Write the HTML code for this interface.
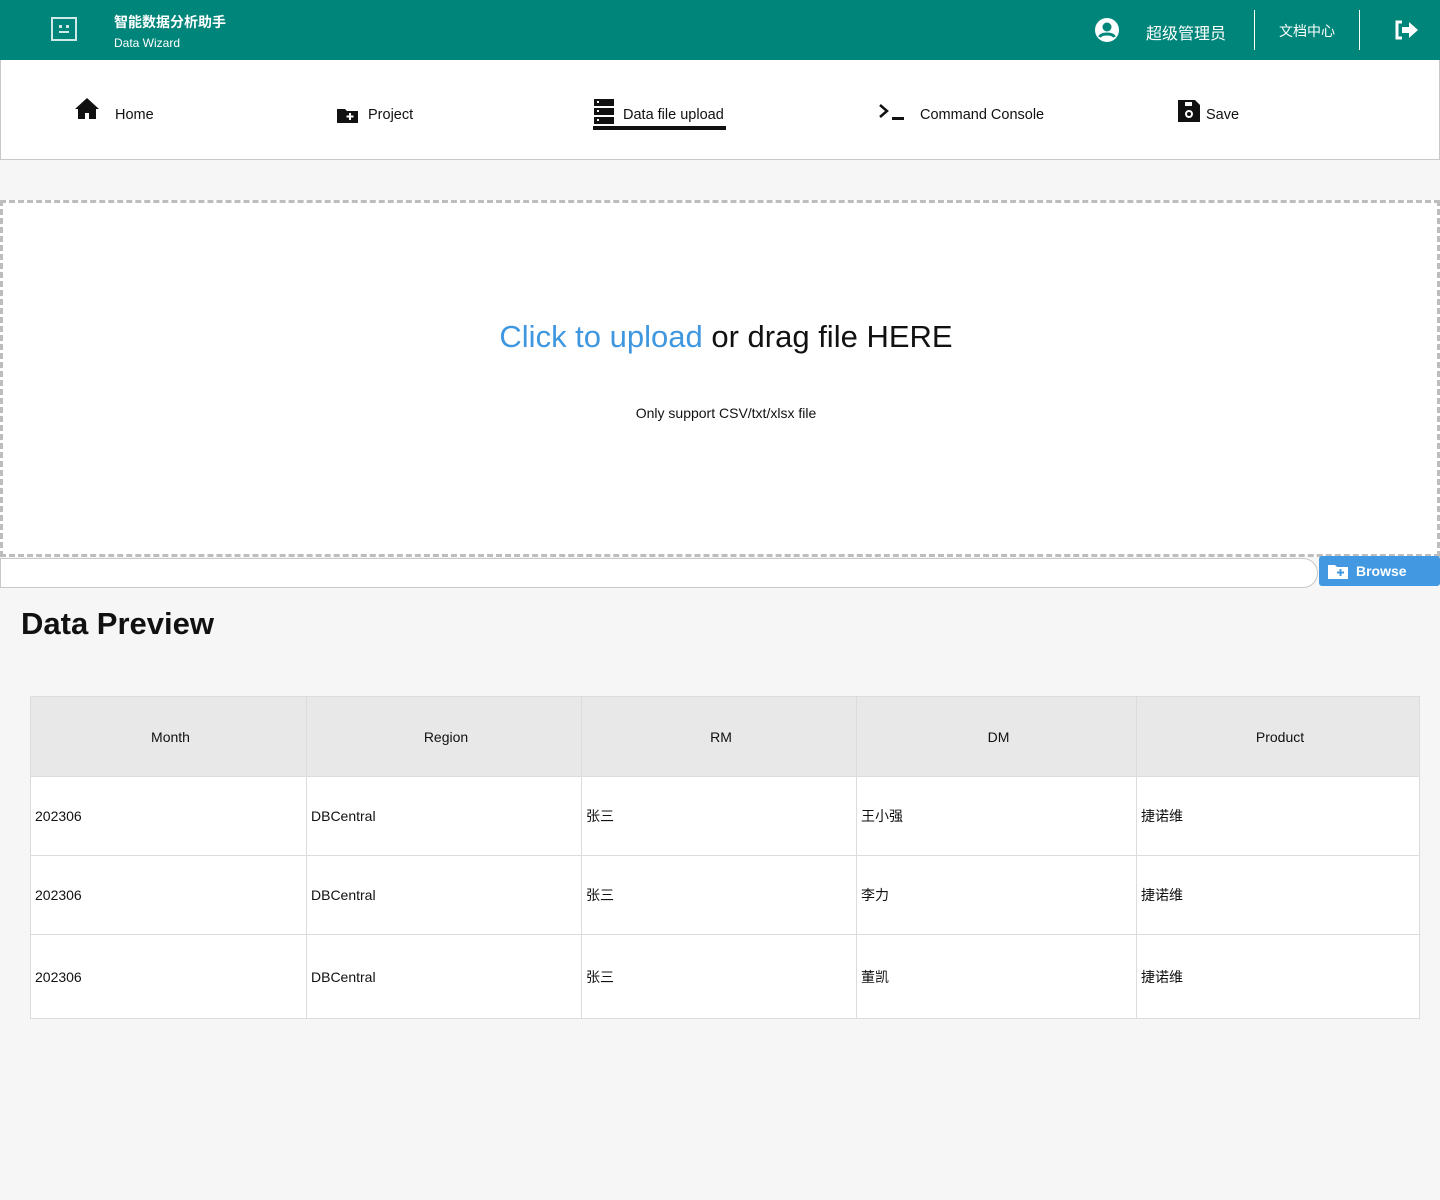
<!DOCTYPE html>
<html><head><meta charset="utf-8"><style>
*{box-sizing:border-box;margin:0;padding:0}
body{width:1440px;height:1200px;background:#f6f6f6;font-family:"Liberation Sans","Noto Sans CJK SC",sans-serif;position:relative;overflow:hidden;color:#111}
.top{position:absolute;left:0;top:0;width:1440px;height:60px;background:#00857a;color:#fff}
.abs{position:absolute}
.nav{position:absolute;left:0;top:60px;width:1440px;height:100px;background:#fff;border:1px solid #c8c8c8;border-top:none}
.ni{position:absolute;top:46px;font-size:14.5px;color:#111;line-height:18px}
.drop{position:absolute;left:0;top:200px;width:1440px;height:357px;border:3px dashed #bdbdbd;background:#fff}
table{position:absolute;left:30px;top:696px;width:1390px;border-collapse:collapse;font-size:14px;background:#fff}
td,th{border:1px solid #dcdcdc;font-weight:normal;text-align:left;padding-left:4px}
th{background:#e8e8e8;text-align:center;height:80px}
</style></head><body>
<div class="top">
 <svg class="abs" style="left:51px;top:17px" width="26" height="25" viewBox="0 0 26 25"><rect x="1" y="1" width="24" height="22" fill="none" stroke="#cfe9e6" stroke-width="2"/><rect x="8" y="8" width="3" height="3" fill="#cfe9e6"/><rect x="15" y="8" width="3" height="3" fill="#cfe9e6"/><rect x="8" y="14" width="10" height="2" fill="#cfe9e6"/></svg>
 <div class="abs" style="left:114px;top:12px;font-size:14px;font-weight:bold">智能数据分析助手</div>
 <div class="abs" style="left:114px;top:36px;font-size:12px">Data Wizard</div>
 <svg class="abs" style="left:1095px;top:18px" width="24" height="24" viewBox="0 0 24 24"><circle cx="12" cy="12" r="12" fill="#fff"/><circle cx="12" cy="9" r="4.5" fill="#00857a"/><path d="M4.5 19c2-4 13-4 15 0" stroke="#00857a" stroke-width="3" fill="none"/></svg>
 <div class="abs" style="left:1146px;top:20px;font-size:16px">超级管理员</div>
 <div class="abs" style="left:1254px;top:10px;width:1px;height:40px;background:#fff"></div>
 <div class="abs" style="left:1279px;top:21px;font-size:14px">文档中心</div>
 <div class="abs" style="left:1359px;top:10px;width:1px;height:40px;background:#fff"></div>
 <svg class="abs" style="left:1394px;top:20px" width="24" height="20" viewBox="0 0 24 20"><path d="M8 2H3v16h5" stroke="#fff" stroke-width="3" fill="none"/><path d="M8 7h7V2l9 8-9 8v-5H8z" fill="#fff"/></svg>
</div>
<div class="nav">
 <svg class="abs" style="left:74px;top:38px" width="24" height="22" viewBox="0 0 24 22"><path d="M12 0L0 11h3v10h7v-6h4v6h7V11h3z" fill="#111"/></svg>
 <div class="ni" style="left:114px">Home</div>
 <svg class="abs" style="left:336px;top:47px" width="21" height="16" viewBox="0 0 21 16"><path d="M0 2h8l2 2h11v12H0z" fill="#111"/><path d="M13 6v7M9.5 9.5h7" stroke="#fff" stroke-width="2"/></svg>
 <div class="ni" style="left:367px">Project</div>
 <svg class="abs" style="left:593px;top:39px" width="20" height="26" viewBox="0 0 20 26"><rect y="0" width="20" height="7" fill="#111"/><rect y="9" width="20" height="7" fill="#111"/><rect y="18" width="20" height="7" fill="#111"/><rect x="3" y="2" width="2" height="2" fill="#fff"/><rect x="3" y="11" width="2" height="2" fill="#fff"/><rect x="3" y="20" width="2" height="2" fill="#fff"/></svg>
 <div class="ni" style="left:622px">Data file upload</div>
 <div class="abs" style="left:592px;top:66px;width:133px;height:4px;background:#111"></div>
 <svg class="abs" style="left:878px;top:43px" width="26" height="18" viewBox="0 0 26 18"><path d="M1 2l7 6-7 6" stroke="#111" stroke-width="2.5" fill="none"/><rect x="13" y="14" width="12" height="3" fill="#111"/></svg>
 <div class="ni" style="left:919px">Command Console</div>
 <svg class="abs" style="left:1177px;top:40px" width="22" height="22" viewBox="0 0 22 22"><path d="M0 0h17l5 5v17H0z" fill="#111"/><rect x="7" y="2" width="7" height="4" fill="#fff"/><circle cx="11" cy="14" r="3" fill="none" stroke="#fff" stroke-width="2"/></svg>
 <div class="ni" style="left:1205px">Save</div>
</div>
<div class="drop">
 <div class="abs" style="left:0;width:1446px;top:116px;text-align:center;font-size:31px;color:#111"><span style="color:#3f97e0">Click to upload</span> or drag file HERE</div>
 <div class="abs" style="left:0;width:1446px;top:202px;text-align:center;font-size:14px">Only support CSV/txt/xlsx file</div>
</div>
<div class="abs" style="left:0;top:558px;width:1318px;height:30px;background:#fff;border:1px solid #c8c8c8;border-radius:0 15px 15px 0"></div>
<div class="abs" style="left:1319px;top:556px;width:121px;height:30px;background:#4299e1;border-radius:3px;color:#fff;font-size:14px;font-weight:bold">
 <svg class="abs" style="left:9px;top:8px" width="20" height="15" viewBox="0 0 20 15"><path d="M0 1h7l2 2h11v12H0z" fill="#fff"/><path d="M12.5 5v7M9 8.5h7" stroke="#4299e1" stroke-width="2"/></svg>
 <span class="abs" style="left:37px;top:7px">Browse</span>
</div>
<div class="abs" style="left:21px;top:606px;font-size:31px;font-weight:bold">Data Preview</div>
<table>
<tr><th style="width:276px">Month</th><th style="width:275px">Region</th><th style="width:275px">RM</th><th style="width:280px">DM</th><th>Product</th></tr>
<tr style="height:79px"><td>202306</td><td>DBCentral</td><td>张三</td><td>王小强</td><td>捷诺维</td></tr>
<tr style="height:79px"><td>202306</td><td>DBCentral</td><td>张三</td><td>李力</td><td>捷诺维</td></tr>
<tr style="height:84px"><td>202306</td><td>DBCentral</td><td>张三</td><td>董凯</td><td>捷诺维</td></tr>
</table>
</body></html>
